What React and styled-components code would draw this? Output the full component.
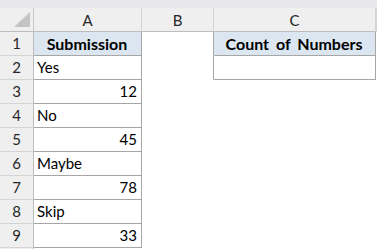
import React from "react";
import styled, { createGlobalStyle } from "styled-components";

const Global = createGlobalStyle`
  html, body { margin: 0; padding: 0; background: #ffffff; }
  body { font-family: Lato, "Liberation Sans", sans-serif; }
`;

const Sheet = styled.div`
  display: grid;
  grid-template-columns: 34px 108px 72px 162px 1px;
  grid-template-rows: 8px 24px repeat(10, 24px);
  width: 377px;
  height: 249px;
  overflow: hidden;
  font-size: 15px;
  color: #000;
`;

const TopBand = styled.div`
  grid-column: 1 / -1;
  background: #e7e7ea;
`;

const Corner = styled.div`
  position: relative;
  background: #efefef;
  border-right: 1px solid #c8c8c8;
  border-bottom: 1px solid #bdbdbd;
  box-sizing: border-box;
`;

const CornerTri = styled.svg`
  position: absolute;
  left: 14px;
  top: 4px;
`;

const ColHead = styled.div`
  background: #efefef;
  border-right: 1px solid #d4d4d4;
  border-bottom: 1px solid #bdbdbd;
  box-sizing: border-box;
  display: flex;
  align-items: center;
  justify-content: center;
  line-height: 23px;
  padding-top: 1px;
  color: #262626;
`;

const RowHead = styled.div`
  background: #efefef;
  border-right: 1px solid #bdbdbd;
  border-bottom: 1px solid #d4d4d4;
  box-sizing: border-box;
  text-align: center;
  line-height: 23px;
  color: #262626;
`;

const Cell = styled.div`
  box-sizing: border-box;
  background: ${(p) => (p.$fill ? "#dce6f1" : "#ffffff")};
  border-right: 1px solid ${(p) => (p.$boxed || p.$edge ? "#a6a6a6" : "transparent")};
  border-bottom: 1px solid ${(p) => (p.$boxed ? "#a6a6a6" : "transparent")};
  line-height: 23px;
  padding: 0 4px 0 3px;
  text-align: ${(p) => p.$align || "left"};
  font-weight: ${(p) => (p.$bold ? 700 : 400)};
  font-size: ${(p) => (p.$bold ? "16px" : "15px")};
  word-spacing: ${(p) => (p.$bold ? "3px" : "0")};
  white-space: nowrap;
  overflow: hidden;
`;

const columns = ["A", "B", "C"];

const rows = [
  { a: "Submission", header: true },
  { a: "Yes" },
  { a: "12", num: true },
  { a: "No" },
  { a: "45", num: true },
  { a: "Maybe" },
  { a: "78", num: true },
  { a: "Skip" },
  { a: "33", num: true },
  { a: "", empty: true },
];

export default function App() {
  return (
    <>
      <Global />
      <Sheet>
        <TopBand />
        <Corner>
          <CornerTri width="16" height="15" viewBox="0 0 16 15">
            <polygon points="16,0 16,15 0,15" fill="#c4c4c4" />
          </CornerTri>
        </Corner>
        {columns.map((c) => (
          <ColHead key={c}>{c}</ColHead>
        ))}
        <ColHead />
        {rows.map((r, i) => {
          const n = i + 1;
          return (
            <React.Fragment key={n}>
              <RowHead>{r.empty ? "" : n}</RowHead>
              <Cell
                $boxed={!r.empty}
                $fill={r.header}
                $bold={r.header}
                $align={r.header ? "center" : r.num ? "right" : "left"}
              >
                {r.a}
              </Cell>
              <Cell $edge={n <= 2} />
              <Cell
                $boxed={n <= 2}
                $fill={n === 1}
                $bold={n === 1}
                $align="center"
              >
                {n === 1 ? "Count of Numbers" : ""}
              </Cell>
              <Cell />
            </React.Fragment>
          );
        })}
      </Sheet>
    </>
  );
}
